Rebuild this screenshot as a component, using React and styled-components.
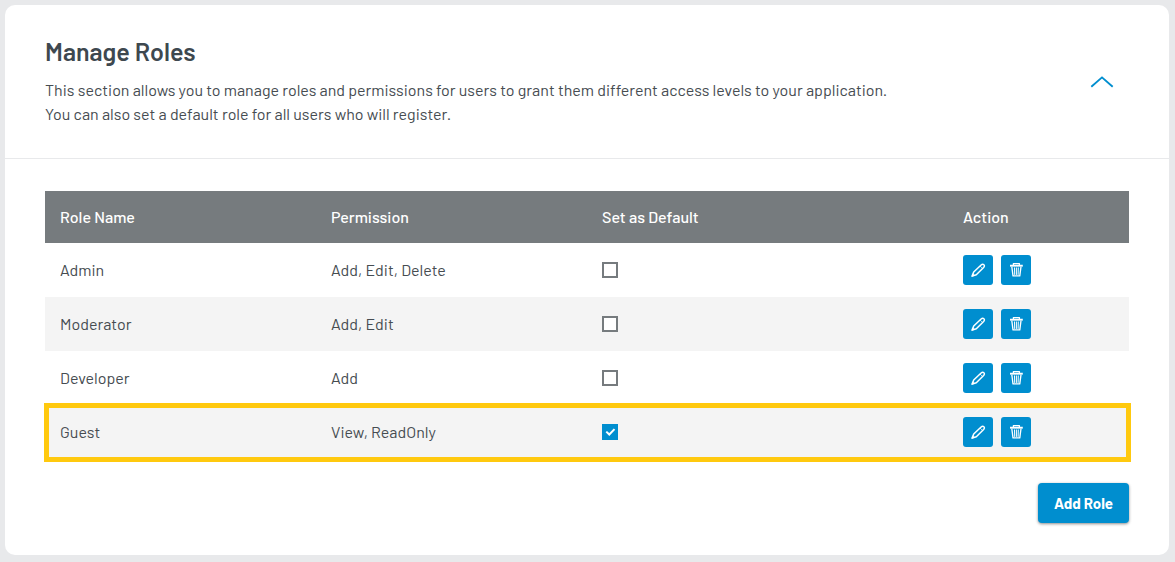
import React, { useState } from "react";
import styled, { createGlobalStyle } from "styled-components";

const GlobalStyle = createGlobalStyle`
  *, *::before, *::after { box-sizing: border-box; }
  body {
    margin: 0;
    background: #e8e9eb;
    color: #464c51;
    font-family: Barlow, Roboto, "Liberation Sans", sans-serif;
    font-size: 16px;
    line-height: 24px;
  }
`;

const Card = styled.section`
  margin: 5px 6px 7px 5px;
  background: #fff;
  border-radius: 10px;
`;

const Header = styled.header`
  display: flex;
  align-items: center;
  justify-content: space-between;
  padding: 32px 55px 32px 40px;
  border-bottom: 1px solid #e8e9eb;
`;

const Title = styled.h2`
  margin: 0 0 12px;
  font-size: 25px;
  font-weight: 600;
  line-height: 29px;
  color: #3e484f;
`;

const Description = styled.p`
  margin: 0;
`;

const CollapseButton = styled.button`
  display: flex;
  padding: 0;
  border: 0;
  background: none;
  color: #008ecf;
  cursor: pointer;
`;

const Content = styled.div`
  padding: 32px 40px;
`;

const Table = styled.table`
  width: 100%;
  table-layout: fixed;
  border-collapse: collapse;
`;

const HeadCell = styled.th`
  width: ${(p) => p.$width};
  height: 52px;
  padding: 0 15px;
  background: #767b7e;
  color: #fff;
  font-weight: 500;
  text-align: left;
`;

const Row = styled.tr`
  position: relative;
  background: ${(p) => (p.$striped ? "#f4f4f4" : "#fff")};

  &::after {
    content: "";
    display: ${(p) => (p.$highlighted ? "block" : "none")};
    position: absolute;
    inset: -2px -2px -3px -1px;
    border: 5px solid #ffc90e;
    pointer-events: none;
  }
`;

const Cell = styled.td`
  height: 54px;
  padding: 0 15px;
`;

const Checkbox = styled.input`
  display: block;
  appearance: none;
  width: 16px;
  height: 16px;
  margin: 0;
  border: 2px solid #767b7e;
  background: #fff;

  &:checked {
    border-color: #008ecf;
    background: #008ecf
      url("data:image/svg+xml,%3Csvg xmlns='http://www.w3.org/2000/svg' viewBox='0 0 12 12'%3E%3Cpath d='M2.3 5.6l3 2.9 5.2-5.4' fill='none' stroke='white' stroke-width='2'/%3E%3C/svg%3E")
      center / 12px 12px no-repeat;
  }
`;

const Actions = styled.div`
  display: flex;
  gap: 8px;
`;

const IconButton = styled.button`
  display: flex;
  align-items: center;
  justify-content: center;
  width: 30px;
  height: 30px;
  padding: 0;
  border: 0;
  border-radius: 3px;
  background: #008ecf;
  color: #fff;
  cursor: pointer;
`;

const Footer = styled.div`
  display: flex;
  justify-content: flex-end;
  margin-top: 24px;
`;

const AddButton = styled.button`
  height: 40px;
  padding: 0 16px;
  border: 0;
  border-radius: 4px;
  background: #008ecf;
  box-shadow: 0 1px 3px rgba(0, 0, 0, 0.45);
  color: #fff;
  font: inherit;
  font-weight: 700;
  font-size: 15px;
  cursor: pointer;
`;

const ChevronUp = () => (
  <svg width="24" height="14" viewBox="0 0 24 14" fill="none" stroke="currentColor" strokeWidth="1.9" aria-hidden="true">
    <path d="M1.3 11.7L12 2.4l10.7 9.3" />
  </svg>
);

const PencilIcon = () => (
  <svg width="16" height="16" viewBox="0 0 16 16" fill="none" stroke="currentColor" strokeWidth="1.5" strokeLinejoin="round" aria-hidden="true">
    <path d="M2.2 14l1.5-4 7.4-7c1-.9 2-1 2.8-.3s.6 1.8-.3 2.8l-7.3 7.2z" />
    <path d="M1.7 14.5l.9-2.7 1.7 1.7z" fill="currentColor" strokeWidth="0.5" />
    <path d="M10 4l2.6 2.5" strokeWidth="0.7" />
  </svg>
);

const TrashIcon = () => (
  <svg width="16" height="16" viewBox="0 0 16 16" fill="none" stroke="currentColor" strokeWidth="1.3" strokeLinejoin="round" aria-hidden="true">
    <path d="M5.4 3V1.6h6V3" />
    <path d="M2 3.7h12.8" strokeWidth="1.9" />
    <path d="M3.8 4.6l1.2 9.3h6.8l1.2-9.3" />
    <path d="M6.5 5.5l.2 7.4M8.4 5.5v7.4M10.3 5.5l-.2 7.4" strokeWidth="1" />
  </svg>
);

const roles = [
  { name: "Admin", permissions: "Add, Edit, Delete" },
  { name: "Moderator", permissions: "Add, Edit" },
  { name: "Developer", permissions: "Add" },
  { name: "Guest", permissions: "View, ReadOnly" },
];

export default function App() {
  const [defaultRole, setDefaultRole] = useState("Guest");

  return (
    <>
      <GlobalStyle />
      <Card>
        <Header>
          <div>
            <Title>Manage Roles</Title>
            <Description>
              This section allows you to manage roles and permissions for users to grant them different access levels to your application.
              <br />
              You can also set a default role for all users who will register.
            </Description>
          </div>
          <CollapseButton type="button" aria-label="Collapse section">
            <ChevronUp />
          </CollapseButton>
        </Header>
        <Content>
          <Table>
            <thead>
              <tr>
                <HeadCell $width="25%">Role Name</HeadCell>
                <HeadCell $width="25%">Permission</HeadCell>
                <HeadCell $width="33.3%">Set as Default</HeadCell>
                <HeadCell $width="16.7%">Action</HeadCell>
              </tr>
            </thead>
            <tbody>
              {roles.map(({ name, permissions }, index) => (
                <Row key={name} $striped={index % 2 === 1} $highlighted={name === defaultRole}>
                  <Cell>{name}</Cell>
                  <Cell>{permissions}</Cell>
                  <Cell>
                    <Checkbox
                      type="checkbox"
                      aria-label={`Set ${name} as default`}
                      checked={name === defaultRole}
                      onChange={() => setDefaultRole(name)}
                    />
                  </Cell>
                  <Cell>
                    <Actions>
                      <IconButton type="button" aria-label={`Edit ${name}`}>
                        <PencilIcon />
                      </IconButton>
                      <IconButton type="button" aria-label={`Delete ${name}`}>
                        <TrashIcon />
                      </IconButton>
                    </Actions>
                  </Cell>
                </Row>
              ))}
            </tbody>
          </Table>
          <Footer>
            <AddButton type="button">Add Role</AddButton>
          </Footer>
        </Content>
      </Card>
    </>
  );
}
